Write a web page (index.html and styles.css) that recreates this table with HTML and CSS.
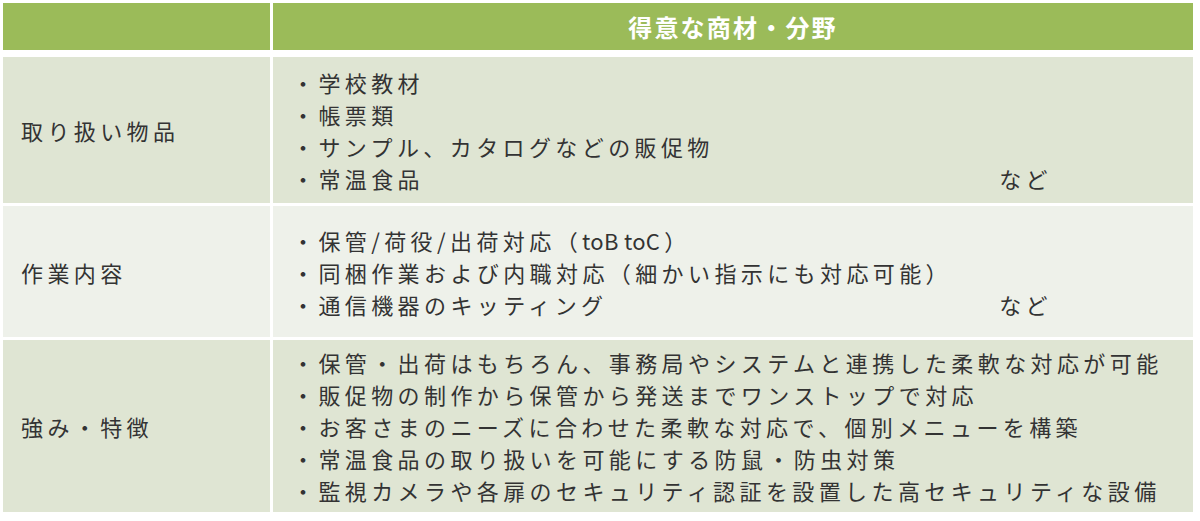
FILE: index.html
```html
<!DOCTYPE html>
<html lang="ja">
<head>
<meta charset="utf-8">
<title>得意な商材・分野</title>
<link rel="stylesheet" href="styles.css">
</head>
<body>
<div class="table">
  <div class="row head">
    <div class="cell label"></div>
    <div class="cell main">得意な商材・分野</div>
  </div>
  <div class="row odd r1">
    <div class="cell label">取り扱い物品</div>
    <div class="cell main">
      <div class="line">・学校教材</div>
      <div class="line">・帳票類</div>
      <div class="line">・サンプル、カタログなどの販促物</div>
      <div class="line"><span>・常温食品</span><span class="etc">など</span></div>
    </div>
  </div>
  <div class="row even r2">
    <div class="cell label">作業内容</div>
    <div class="cell main">
      <div class="line">・保管/荷役/出荷対応（<span class="latin">toB toC</span>）</div>
      <div class="line">・同梱作業および内職対応（細かい指示にも対応可能）</div>
      <div class="line"><span>・通信機器のキッティング</span><span class="etc">など</span></div>
    </div>
  </div>
  <div class="row odd r3">
    <div class="cell label">強み・特徴</div>
    <div class="cell main">
      <div class="line">・保管・出荷はもちろん、事務局やシステムと連携した柔軟な対応が可能</div>
      <div class="line">・販促物の制作から保管から発送までワンストップで対応</div>
      <div class="line">・お客さまのニーズに合わせた柔軟な対応で、個別メニューを構築</div>
      <div class="line">・常温食品の取り扱いを可能にする防鼠・防虫対策</div>
      <div class="line">・監視カメラや各扉のセキュリティ認証を設置した高セキュリティな設備</div>
    </div>
  </div>
</div>
</body>
</html>
```
FILE: styles.css
```css
html, body {
  margin: 0;
  padding: 0;
  background: #ffffff;
}

body {
  font-family: "Noto Sans CJK JP", "Noto Sans", sans-serif;
  color: #333333;
}

.table {
  display: flex;
  flex-direction: column;
  gap: 3px;
  padding: 3px 0 0 3px;
  width: 1190px;
}

.row {
  display: flex;
  gap: 3px;
}

.cell {
  display: flex;
  box-sizing: border-box;
}

.cell.label {
  width: 267px;
  align-items: center;
  padding-left: 18px;
  font-size: 22px;
  letter-spacing: 4.4px;
}

.cell.main {
  width: 920px;
  flex-direction: column;
  justify-content: center;
  padding-left: 19px;
  font-size: 22px;
  letter-spacing: 4.4px;
}

.head {
  height: 47px;
  margin-bottom: 4px;
}

.head .cell {
  background: #9bbb59;
}

.head .cell.main {
  align-items: center;
  padding-left: 0;
  color: #ffffff;
  font-weight: 700;
  font-size: 24px;
  letter-spacing: 2.2px;
}

.odd .cell {
  background: #dfe5d3;
}

.even .cell {
  background: #eef1ea;
}

.r1 { height: 146px; }
.r2 { height: 131px; }
.r3 { height: 172px; }

.line {
  display: flex;
  line-height: 32px;
  white-space: pre;
}

.latin {
  letter-spacing: 0.3px;
  margin-right: 4px;
}

.etc {
  margin-left: auto;
  margin-right: 141px;
}
```
